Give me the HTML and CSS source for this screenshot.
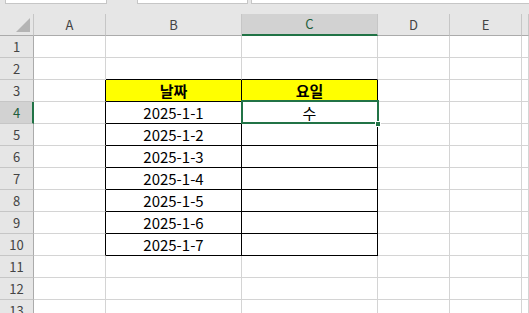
FILE: index.html
```html
<!DOCTYPE html>
<html>
<head>
<meta charset="utf-8">
<title>요일 구하기</title>
<link rel="stylesheet" href="styles.css">
</head>
<body>
<div class="topbar">
	<div class="box box-name"></div>
	<div class="box box-fx"></div>
	<div class="box box-formula"></div>
</div>
<div class="sheet">
	<div class="corner"><span class="tri"></span></div>
	<div class="ch">A</div><div class="ch">B</div><div class="ch sel">C</div><div class="ch">D</div><div class="ch">E</div><div class="ch"></div>

	<div class="rh">1</div><div class="c"></div><div class="c"></div><div class="c"></div><div class="c"></div><div class="c"></div><div class="c"></div>
	<div class="rh">2</div><div class="c"></div><div class="c tt"></div><div class="c tt"></div><div class="c"></div><div class="c"></div><div class="c"></div>
	<div class="rh">3</div><div class="c tl"></div><div class="c t hd">날짜</div><div class="c t hd">요일</div><div class="c"></div><div class="c"></div><div class="c"></div>
	<div class="rh sel">4</div><div class="c tl"></div><div class="c t">2025-1-1</div><div class="c t active">수</div><div class="c"></div><div class="c"></div><div class="c"></div>
	<div class="rh">5</div><div class="c tl"></div><div class="c t">2025-1-2</div><div class="c t"></div><div class="c"></div><div class="c"></div><div class="c"></div>
	<div class="rh">6</div><div class="c tl"></div><div class="c t">2025-1-3</div><div class="c t"></div><div class="c"></div><div class="c"></div><div class="c"></div>
	<div class="rh">7</div><div class="c tl"></div><div class="c t">2025-1-4</div><div class="c t"></div><div class="c"></div><div class="c"></div><div class="c"></div>
	<div class="rh">8</div><div class="c tl"></div><div class="c t">2025-1-5</div><div class="c t"></div><div class="c"></div><div class="c"></div><div class="c"></div>
	<div class="rh">9</div><div class="c tl"></div><div class="c t">2025-1-6</div><div class="c t"></div><div class="c"></div><div class="c"></div><div class="c"></div>
	<div class="rh">10</div><div class="c tl"></div><div class="c t">2025-1-7</div><div class="c t"></div><div class="c"></div><div class="c"></div><div class="c"></div>
	<div class="rh">11</div><div class="c"></div><div class="c"></div><div class="c"></div><div class="c"></div><div class="c"></div><div class="c"></div>
	<div class="rh">12</div><div class="c"></div><div class="c"></div><div class="c"></div><div class="c"></div><div class="c"></div><div class="c"></div>
	<div class="rh">13</div><div class="c"></div><div class="c"></div><div class="c"></div><div class="c"></div><div class="c"></div><div class="c"></div>
</div>
</body>
</html>
```

FILE: styles.css
```css
html, body{
	margin: 0;
	padding: 0;
	height: 100%;
	overflow: hidden;
}
body{
	background: #e6e6e6;
	font-family: "Noto Sans CJK KR", "Noto Sans", sans-serif;
	color: #000;
}
.topbar{
	height: 4px;
	position: relative;
	display: flex;
	margin-bottom: 10px;
}
.box{
	height: 4px;
	box-sizing: border-box;
	background: #fff;
	border: 1px solid #c6c6c6;
	border-top: 0;
}
.box-name{
	margin-left: 5px;
	width: 102px;
}
.box-fx{
	margin-left: 30px;
	width: 111px;
}
.box-formula{
	margin-left: 3px;
	flex: 1;
	border-right: 0;
}
.sheet{
	display: grid;
	grid-template-columns: 34px 72px 136px 136px 72px 72px 1fr;
	grid-auto-rows: 22px;
	background: #fff;
}
.sheet > div{
	box-sizing: border-box;
}
.corner{
	background: #e6e6e6;
	border-right: 1px solid #c6c6c6;
	border-bottom: 1px solid #ababab;
	position: relative;
}
.tri{
	position: absolute;
	right: 3px;
	bottom: 3px;
	width: 14px;
	height: 14px;
	background: #b4b4b4;
	clip-path: polygon(100% 0, 100% 100%, 0 100%);
}
.ch{
	background: #e6e6e6;
	border-right: 1px solid #c6c6c6;
	border-bottom: 1px solid #ababab;
	font-size: 13px;
	line-height: 21px;
	text-align: center;
	color: #444;
}
.ch.sel{
	background: #d2d2d2;
	border-bottom: 2px solid #217346;
	color: #1e5e3b;
	line-height: 20px;
}
.rh{
	background: #e6e6e6;
	border-right: 1px solid #ababab;
	border-bottom: 1px solid #c6c6c6;
	font-size: 13px;
	line-height: 22px;
	text-align: center;
	color: #444;
}
.rh.sel{
	background: #d2d2d2;
	border-right: 2px solid #217346;
	color: #1e5e3b;
	padding-left: 1px;
}
.c{
	border-right: 1px solid #d4d4d4;
	border-bottom: 1px solid #d4d4d4;
	font-size: 15px;
	line-height: 21px;
	text-align: center;
}
.c.t{
	border-right-color: #000;
	border-bottom-color: #000;
}
.c.tl{
	border-right-color: #000;
}
.c.tt{
	border-bottom-color: #000;
}
.c.hd{
	background: #ffff00;
	font-weight: bold;
}
.c.active{
	position: relative;
}
.c.active::after{
	content: "";
	position: absolute;
	left: -1px;
	top: -2px;
	right: -2px;
	bottom: -1px;
	border: 2px solid #217346;
}
.c.active::before{
	content: "";
	position: absolute;
	right: -4px;
	bottom: -4px;
	width: 6px;
	height: 6px;
	background: #217346;
	border: 1px solid #fff;
	box-sizing: border-box;
	z-index: 1;
}
```
